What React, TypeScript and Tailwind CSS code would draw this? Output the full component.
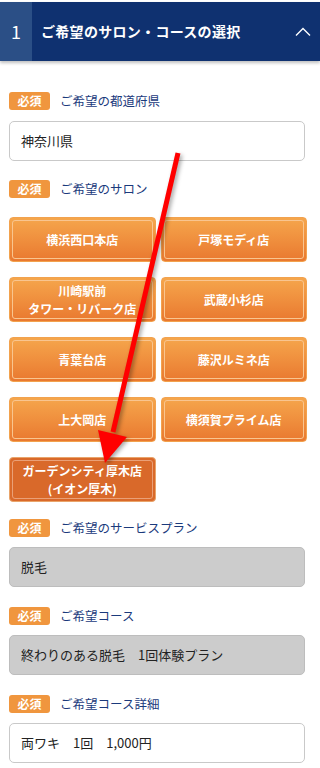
import React from "react";

const font = { fontFamily: '"Noto Sans CJK JP", "Noto Sans", sans-serif' };

function Badge() {
  return (
    <span className="inline-flex h-[18px] w-[41px] items-center justify-center rounded-[3px] bg-[#f0963e] text-[12px] font-bold leading-none text-white">
      必須
    </span>
  );
}

function Label({ text }: { text: string }) {
  return (
    <div className="flex h-[18px] items-center gap-[10px]">
      <Badge />
      <span className="text-[12.5px] leading-none text-[#1b3a7c]">{text}</span>
    </div>
  );
}

function Field({ text, gray, top }: { text: string; gray?: boolean; top: string }) {
  return (
    <div
      className={
        "flex h-[40px] items-center rounded-[5px] border px-[11px] text-[13px] text-[#222] " +
        top +
        " " +
        (gray ? "border-[#bdbdbd] bg-[#cccccc]" : "border-[#c9c9c9] bg-white")
      }
    >
      {text}
    </div>
  );
}

function Shop({ lines, selected }: { lines: string[]; selected?: boolean }) {
  return (
    <div
      className={
        "h-[45px] rounded-[4px] border p-[2px] " +
        (selected
          ? "border-[#e9a46a] bg-[#d9692a]"
          : "border-[#f2a24e] bg-gradient-to-b from-[#f5a64c] to-[#e9782f]")
      }
    >
      <div
        className={
          "flex h-full flex-col items-center justify-center rounded-[3px] border text-center text-[12px] font-bold leading-[18px] text-white " +
          (selected ? "border-[#eaa077]" : "border-[#f9c58f]")
        }
      >
        {lines.map((l) => (
          <span key={l}>{l}</span>
        ))}
      </div>
    </div>
  );
}

export default function App() {
  return (
    <div className="relative h-[768px] w-[320px] overflow-hidden bg-white" style={font}>
      <div className="h-[2px]" />
      <div className="flex h-[59px] bg-[#0f3170] text-white shadow-[0_2px_3px_rgba(0,0,0,0.25)]">
        <div className="flex w-[32px] items-center justify-center bg-[#2b4f86] text-[18px]">1</div>
        <div className="flex flex-1 items-center pl-[9px] text-[14px] font-bold tracking-[0.3px]">
          ご希望のサロン・コースの選択
        </div>
        <div className="flex w-[34px] items-center justify-center">
          <svg width="16" height="10" viewBox="0 0 16 10" fill="none">
            <path d="M1 8.5L8 1.5L15 8.5" stroke="white" strokeWidth="1.4" />
          </svg>
        </div>
      </div>

      <div className="px-[9px] pt-[31px]">
        <Label text="ご希望の都道府県" />
        <div className="w-[296px]">
          <Field text="神奈川県" top="mt-[11px]" />
        </div>

        <div className="mt-[19px]">
          <Label text="ご希望のサロン" />
        </div>
        <div className="mt-[19px] grid w-[298px] grid-cols-2 gap-x-[5px] gap-y-[15px]">
          <Shop lines={["横浜西口本店"]} />
          <Shop lines={["戸塚モディ店"]} />
          <Shop lines={["川崎駅前", "タワー・リバーク店"]} />
          <Shop lines={["武蔵小杉店"]} />
          <Shop lines={["青葉台店"]} />
          <Shop lines={["藤沢ルミネ店"]} />
          <Shop lines={["上大岡店"]} />
          <Shop lines={["横須賀プライム店"]} />
          <Shop lines={["ガーデンシティ厚木店", "(イオン厚木)"]} selected />
        </div>

        <div className="mt-[17px] w-[296px]">
          <Label text="ご希望のサービスプラン" />
          <Field text="脱毛" gray top="mt-[10px]" />
          <div className="mt-[20px]">
            <Label text="ご希望コース" />
          </div>
          <Field text="終わりのある脱毛　1回体験プラン" gray top="mt-[10px]" />
          <div className="mt-[20px]">
            <Label text="ご希望コース詳細" />
          </div>
          <Field text="両ワキ　1回　1,000円" top="mt-[10px]" />
        </div>
      </div>

      <svg
        className="pointer-events-none absolute left-0 top-0"
        width="320"
        height="768"
        viewBox="0 0 320 768"
        style={{ filter: "drop-shadow(2px 2px 2px rgba(0,0,0,0.35))" }}
      >
        <line x1="178" y1="153" x2="113" y2="432" stroke="#ff0000" strokeWidth="5" />
        <polygon points="105,463 98,430 127,437" fill="#ff0000" />
      </svg>
    </div>
  );
}
